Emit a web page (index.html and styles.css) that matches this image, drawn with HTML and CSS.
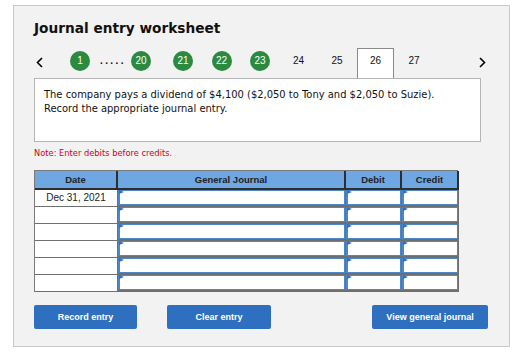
FILE: index.html
```html
<!DOCTYPE html>
<html lang="en">
<head>
    <meta charset="UTF-8">
    <title>Journal entry worksheet</title>
    <link rel="stylesheet" href="styles.css">
</head>
<body>
    <div class="worksheet">
        <h1>Journal entry worksheet</h1>

        <div class="steps">
            <span class="arrow prev">
                <svg width="7" height="11" viewBox="0 0 7 11"><path d="M6 1 L1.5 5.5 L6 10" fill="none" stroke="#000" stroke-width="1.6"/></svg>
            </span>
            <span class="dot first">1</span>
            <span class="more">.....</span>
            <span class="dot twenty">20</span>
            <span class="slot first-slot"><span class="dot">21</span></span>
            <span class="slot"><span class="dot">22</span></span>
            <span class="slot"><span class="dot">23</span></span>
            <span class="slot">24</span>
            <span class="slot">25</span>
            <span class="slot current">26</span>
            <span class="slot">27</span>
            <span class="arrow next">
                <svg width="7" height="11" viewBox="0 0 7 11"><path d="M1 1 L5.5 5.5 L1 10" fill="none" stroke="#000" stroke-width="1.6"/></svg>
            </span>
        </div>

        <div class="question">
            <p>The company pays a dividend of $4,100 ($2,050 to Tony and $2,050 to Suzie).</p>
            <p>Record the appropriate journal entry.</p>
        </div>

        <p class="note">Note: Enter debits before credits.</p>

        <div class="journal">
            <div class="head">Date</div>
            <div class="head">General Journal</div>
            <div class="head">Debit</div>
            <div class="head last">Credit</div>

            <div class="date">Dec 31, 2021</div>
            <div class="entry"></div>
            <div class="entry"></div>
            <div class="entry"></div>

            <div class="date"></div>
            <div class="entry"></div>
            <div class="entry"></div>
            <div class="entry"></div>

            <div class="date"></div>
            <div class="entry"></div>
            <div class="entry"></div>
            <div class="entry"></div>

            <div class="date"></div>
            <div class="entry"></div>
            <div class="entry"></div>
            <div class="entry"></div>

            <div class="date"></div>
            <div class="entry"></div>
            <div class="entry"></div>
            <div class="entry"></div>

            <div class="date"></div>
            <div class="entry"></div>
            <div class="entry"></div>
            <div class="entry"></div>
        </div>

        <div class="actions">
            <button>Record entry</button>
            <button class="clear">Clear entry</button>
            <button class="view">View general journal</button>
        </div>
    </div>
</body>
</html>
```

FILE: styles.css
```css
body {
    margin: 0;
    background-color: #fff;
    font-family: "Liberation Sans", Arial, sans-serif;
}
.worksheet {
    width: 497px;
    margin: 5px 0 0 13px;
    padding: 13px 0 17px 20px;
    box-sizing: border-box;
    background-color: #f2f2f2;
    border: 1px solid #c8c8c8;
}
h1 {
    margin: 0;
    font-family: "DejaVu Sans", Verdana, sans-serif;
    font-size: 13.7px;
    line-height: 18px;
    color: #111;
}

/* step navigation */
.steps {
    display: flex;
    align-items: flex-start;
    width: 452px;
    height: 30px;
    margin-top: 11px;
    font-size: 10px;
    color: #111;
}
.arrow {
    display: flex;
    height: 20px;
    margin-top: 4px;
    align-items: center;
}
.prev {
    margin-left: 2px;
}
.next {
    margin-left: auto;
}
.dot {
    display: inline-block;
    width: 20px;
    height: 20px;
    line-height: 20px;
    margin-top: 3px;
    border-radius: 50%;
    background-color: #2b8a3e;
    color: #fff;
    text-align: center;
}
.dot.first {
    margin-left: 27px;
}
.more {
    width: 25px;
    margin: 3px 0 0 10px;
    line-height: 20px;
    font-weight: bold;
    letter-spacing: 2.4px;
}
.dot.twenty {
    margin-left: 6px;
}
.slot {
    width: 38.5px;
    height: 30px;
    box-sizing: border-box;
    padding-top: 3px;
    line-height: 20px;
    text-align: center;
}
.slot .dot {
    margin-top: 0;
}
.first-slot {
    margin-left: 12.75px;
}
.current {
    position: relative;
    z-index: 1;
    margin: 0 0.75px;
    width: 37px;
    background-color: #fff;
    border: 1px solid #8a8a8a;
    border-bottom: none;
    padding-top: 2px;
}

/* question */
.question {
    width: 447px;
    height: 64px;
    box-sizing: border-box;
    padding: 9px 9px;
    background-color: #fff;
    border: 1px solid #b5b5b5;
    font-family: "DejaVu Sans", Verdana, sans-serif;
    font-size: 9.95px;
    line-height: 14px;
    color: #111;
}
.question p {
    margin: 0;
}
.note {
    margin: 6px 0 0;
    font-family: "DejaVu Sans", Verdana, sans-serif;
    font-size: 8.3px;
    line-height: 10px;
    color: #d0021b;
}

/* journal grid */
.journal {
    display: grid;
    grid-template-columns: 83px 228px 56px 57px;
    grid-template-rows: 19px repeat(6, 17px);
    width: 424px;
    margin-top: 12px;
    border-top: 1px solid #7a7a7a;
    border-left: 1px solid #7a7a7a;
    box-sizing: border-box;
    font-size: 10px;
    color: #222;
}
.journal > div {
    box-sizing: border-box;
    border-right: 1px solid #6f6f6f;
    border-bottom: 1px solid #6f6f6f;
}
.journal .head {
    background-color: #6fa7e2;
    border-right: 2px solid #2e2e2e;
    border-bottom: 2px solid #2e2e2e;
    font-size: 9.5px;
    font-weight: bold;
    line-height: 17px;
    text-align: center;
}
.journal .date {
    background-color: #fff;
    line-height: 16px;
    text-align: center;
}
.journal .entry {
    position: relative;
    background-color: #fff;
    border-right: 1px solid #6f6f6f;
    border-bottom: 2px solid #6f6f6f;
    box-shadow: inset 2px 0 0 #4f86c6, inset -1px -1px 0 #4f86c6, inset 0 1px 0 #4f86c6;
}
.journal .entry::before {
    content: "";
    position: absolute;
    left: 1px;
    top: 0;
    border-left: 5px solid #2e6fc4;
    border-top: 2.5px solid transparent;
    border-bottom: 2.5px solid transparent;
}

/* buttons */
.actions {
    display: flex;
    width: 454px;
    margin-top: 13px;
}
button {
    width: 103px;
    height: 24px;
    padding: 0;
    background-color: #2f6fbf;
    color: #fff;
    border: none;
    border-radius: 2px;
    font-family: "Liberation Sans", Arial, sans-serif;
    font-size: 9px;
    font-weight: bold;
    cursor: pointer;
}
button.clear {
    width: 104px;
    margin-left: 30px;
}
button.view {
    width: 116px;
    margin-left: auto;
}
```
